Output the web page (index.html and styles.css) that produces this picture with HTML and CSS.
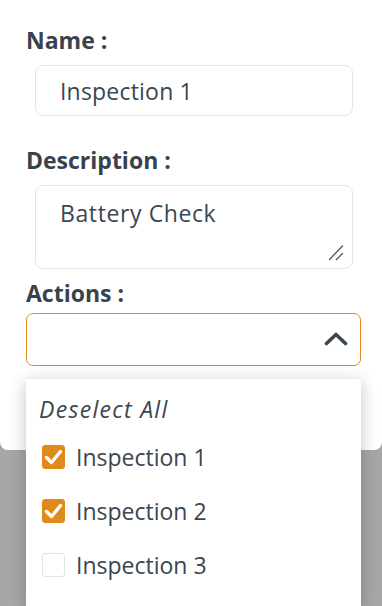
FILE: index.html
```html
<!DOCTYPE html>
<html lang="en">
<head>
<meta charset="utf-8">
<title>Inspection</title>
<link rel="stylesheet" href="styles.css">
</head>
<body>
<div class="modal">
  <div class="label">Name :</div>
  <input class="field" type="text" value="Inspection 1">
  <div class="label label-gap">Description :</div>
  <div class="area-wrap">
    <textarea class="area">Battery Check</textarea>
    <svg class="grip" width="16" height="17" viewBox="0 0 16 17"><path d="M1.5 15.5 L14.5 2 M8.5 15.5 L14.5 9.5" stroke="#555c63" stroke-width="1.4" stroke-linecap="round" fill="none"/></svg>
  </div>
  <div class="label label-gap2">Actions :</div>
  <div class="select">
    <svg class="chev" width="24" height="14" viewBox="0 0 24 14"><path d="M2.5 11.5 L12 2.5 L21.5 11.5" stroke="#3b4651" stroke-width="3.6" stroke-linecap="round" stroke-linejoin="round" fill="none"/></svg>
  </div>
</div>
<div class="menu">
  <div class="deselect">Deselect All</div>
  <div class="opt"><span class="box on"><svg width="23" height="24" viewBox="0 0 23 24"><path d="M4.5 12.5 L9.5 17.5 L18.5 6.5" stroke="#fff" stroke-width="3.4" stroke-linecap="round" stroke-linejoin="round" fill="none"/></svg></span><span>Inspection 1</span></div>
  <div class="opt"><span class="box on"><svg width="23" height="24" viewBox="0 0 23 24"><path d="M4.5 12.5 L9.5 17.5 L18.5 6.5" stroke="#fff" stroke-width="3.4" stroke-linecap="round" stroke-linejoin="round" fill="none"/></svg></span><span>Inspection 2</span></div>
  <div class="opt"><span class="box"></span><span>Inspection 3</span></div>
</div>
</body>
</html>
```
FILE: styles.css
```css
html, body {
  margin: 0;
  height: 606px;
  overflow: hidden;
}
body {
  position: relative;
  background: #a7a7a7;
  font-family: "Open Sans", sans-serif;
  color: #3b4651;
}
.modal {
  background: #fff;
  height: 450px;
  box-sizing: border-box;
  padding: 28px 0 0 26px;
  border-radius: 0 0 8px 8px;
}
.label {
  font-weight: 700;
  font-size: 23px;
  line-height: 24px;
  color: #38424c;
}
.label-gap { margin-top: 32px; }
.label-gap2 { margin-top: 12px; }
.field {
  display: block;
  margin: 13px 0 0 9px;
  width: 318px;
  height: 51px;
  box-sizing: border-box;
  border: 1px solid #e4e4e4;
  border-radius: 8px;
  padding: 0 0 0 24px;
  font-family: "Open Sans", sans-serif;
  font-size: 23px;
  letter-spacing: 0.2px;
  color: #3b4651;
  background: #fff;
  outline: none;
}
.area-wrap {
  position: relative;
  margin: 13px 0 0 9px;
  width: 318px;
  height: 84px;
}
.area {
  display: block;
  width: 100%;
  height: 100%;
  box-sizing: border-box;
  border: 1px solid #e4e4e4;
  border-radius: 8px;
  padding: 15px 24px 0;
  font-family: "Open Sans", sans-serif;
  font-size: 23px;
  line-height: 24px;
  letter-spacing: 0.6px;
  color: #3b4651;
  resize: none;
  outline: none;
  overflow: hidden;
}
.grip {
  position: absolute;
  right: 9px;
  bottom: 8px;
}
.select {
  margin: 8px 0 0 0;
  width: 335px;
  height: 53px;
  box-sizing: border-box;
  border: 1px solid #e08a1c;
  border-radius: 7px;
  display: flex;
  align-items: center;
  justify-content: flex-end;
  padding-right: 12px;
}
.chev { display: block; margin-top: -2px; }
.menu {
  position: absolute;
  top: 379px;
  left: 26px;
  width: 335px;
  height: 227px;
  overflow: hidden;
  background: #fff;
  box-shadow: 0 3px 16px rgba(0, 0, 0, 0.24);
  box-sizing: border-box;
  padding: 18px 0 0 13px;
}
.deselect {
  font-style: italic;
  font-size: 23px;
  line-height: 24px;
  letter-spacing: 1.3px;
  margin-bottom: 9px;
}
.opt {
  height: 54px;
  display: flex;
  align-items: center;
  gap: 11px;
  padding-left: 3px;
  font-size: 23px;
  line-height: 24px;
}
.box {
  width: 23px;
  height: 24px;
  box-sizing: border-box;
  border: 1px solid #e3e3e3;
  border-radius: 3px;
  background: #fff;
  display: block;
}
.box svg { display: block; margin: -1px; }
.box.on {
  background: #e08a1c;
  border-color: #e08a1c;
}
```
